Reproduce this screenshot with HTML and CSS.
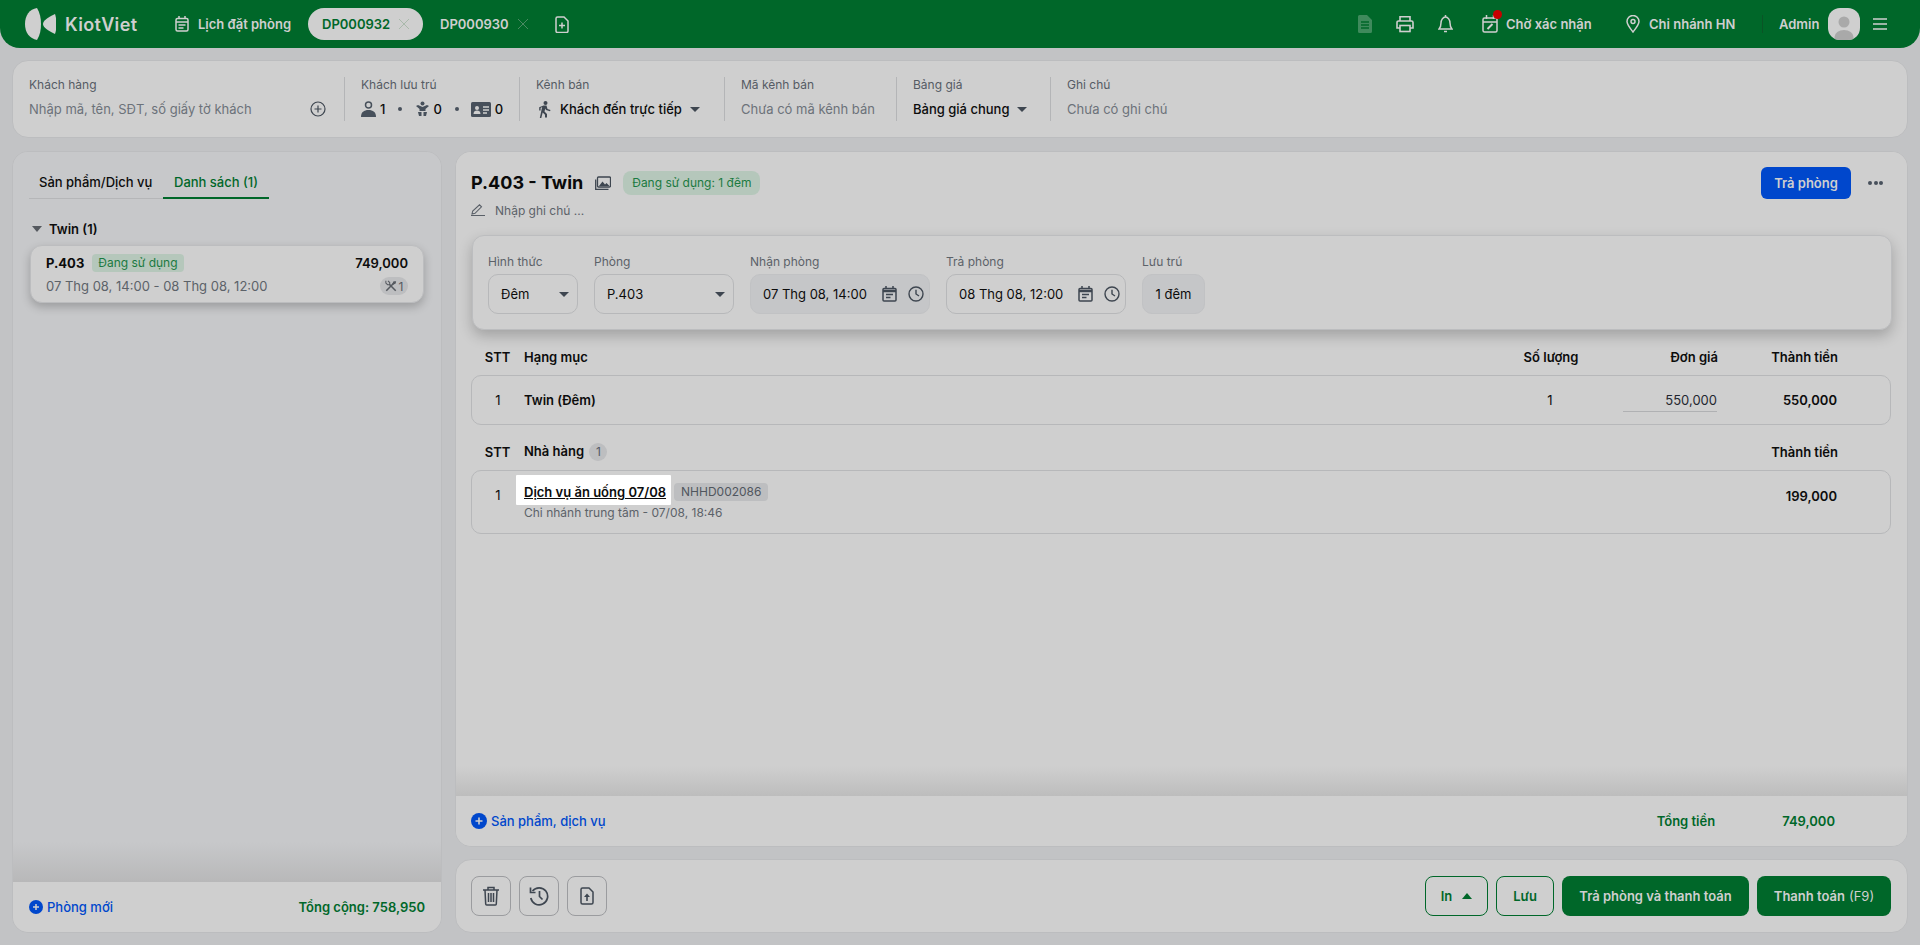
FILE: index.html
```html
<!DOCTYPE html>
<html lang="vi">
<head>
<meta charset="utf-8">
<title>KiotViet</title>
<link rel="stylesheet" href="styles.css">
</head>
<body>
<div class="page">
<header class="topbar">
  <svg class="logo" viewBox="0 0 32 32"><path d="M13 0C5.500 1 1 7.500 1 16S5.500 30.500 13 32C16 27 17 22 17 16S16 5 13 0Z" fill="#cfcfcf"/><path d="M31 6C24 9 19 13 19 16S24 23 31 26C32 23 32.500 19.500 32.500 16S32 9 31 6Z" fill="#cfcfcf"/></svg>
  <span class="brand">KiotViet</span>
  <svg class="ic14 nav-cal" viewBox="0 0 14 16" fill="none" stroke="#cfcfcf" stroke-width="1.5"><rect x="1" y="2.5" width="12" height="12.5" rx="1.5"/><path d="M4 0v3M10 0v3M1 6h12M3.5 9h7M3.5 12h5"/></svg>
  <span class="nav-link">Lịch đặt phòng</span>
  <span class="tab-pill">DP000932<svg class="x" viewBox="0 0 12 12"><path d="M1 1l10 10M11 1L1 11"/></svg></span>
  <span class="tab-plain">DP000930<svg class="x dark" viewBox="0 0 12 12"><path d="M1 1l10 10M11 1L1 11"/></svg></span>
  <svg class="nav-new" viewBox="0 0 14 17" fill="none" stroke="#cfcfcf" stroke-width="1.5"><path d="M1 2.500A1.500 1.500 0 0 1 2.500 1H9l4 4v10a1.500 1.500 0 0 1-1.500 1.500h-9A1.500 1.500 0 0 1 1 15Z"/><path d="M7 6.500v6M4 9.500h6"/></svg>
  <div class="top-right">
    <svg class="t-doc" viewBox="0 0 14 18"><path d="M1.500 0H9l5 5v11.500a1.500 1.500 0 0 1-1.500 1.500h-11A1.500 1.500 0 0 1 0 16.500v-15A1.500 1.500 0 0 1 1.500 0Z" fill="#3f8a5c"/><path d="M3 7h8M3 10h8M3 13h8" stroke="#006729" stroke-width="1.300"/></svg>
    <svg class="t-print" viewBox="0 0 18 18" fill="none" stroke="#cfcfcf" stroke-width="1.600"><path d="M4 6V1.800h10V6M4 13H1V7.500A1.500 1.500 0 0 1 2.500 6h13A1.500 1.500 0 0 1 17 7.500V13h-3"/><rect x="4" y="10.500" width="10" height="6"/></svg>
    <svg class="t-bell" viewBox="0 0 15 18" fill="none" stroke="#cfcfcf" stroke-width="1.500"><path d="M1 14h13c-1.500-1.500-2-3-2-6S10 2 7.500 2 3 5 3 8s-.5 4.500-2 6Z"/><path d="M7.500 0v2M6 16.500h3" /></svg>
    <span class="t-pend">
      <svg class="t-pcal" viewBox="0 0 16 18" fill="none" stroke="#cfcfcf" stroke-width="1.500"><rect x="1" y="3" width="14" height="14" rx="1.500"/><path d="M4.500 0v4M11.500 0v4M1 7h14"/><path d="M5.500 14l5-5" stroke-width="2"/></svg>
      <i class="red-dot"></i>
    </span>
    <span class="t-text t-wait">Chờ xác nhận</span>
    <svg class="t-pin" viewBox="0 0 14 18" fill="none" stroke="#cfcfcf" stroke-width="1.500"><path d="M7 17C3.500 12.500 1 9.500 1 6.500a6 6 0 0 1 12 0C13 9.500 10.500 12.500 7 17Z"/><circle cx="7" cy="6.500" r="2"/></svg>
    <span class="t-text t-branch">Chi nhánh HN</span>
    <i class="t-sep"></i>
    <span class="t-admin">Admin</span>
    <span class="avatar"><svg viewBox="0 0 32 32"><circle cx="16" cy="14" r="5.500" fill="#a9a9a9"/><ellipse cx="16" cy="29" rx="9.500" ry="7" fill="#a9a9a9"/></svg></span>
    <svg class="t-menu" viewBox="0 0 14 12" stroke="#cfcfcf" stroke-width="1.500"><path d="M0 1h14M0 6h14M0 11h14"/></svg>
  </div>
</header>

<section class="infobar">
  <div class="ib ib-cust">
    <div class="lbl">Khách hàng</div>
    <div class="val muted cust-row"><span>Nhập mã, tên, SĐT, số giấy tờ khách</span>
      <svg class="plus-o" viewBox="0 0 16 16" fill="none" stroke="#3e4650" stroke-width="1.200"><circle cx="8" cy="8" r="7"/><path d="M8 4.500v7M4.500 8h7"/></svg></div>
  </div>
  <div class="ib ib-guest">
    <div class="lbl">Khách lưu trú</div>
    <div class="val guests">
      <svg class="g-ad" viewBox="0 0 15 16"><circle cx="7.500" cy="4" r="3" fill="none" stroke="#47505b" stroke-width="1.500"/><path d="M0 16c0-5 3-7 7.500-7S15 11 15 16Z" fill="#47505b"/></svg><b>1</b><i class="dot"></i>
      <svg class="g-ch" viewBox="0 0 13 16" fill="#47505b"><circle cx="6.500" cy="2.500" r="2"/><path d="M0 5l2-1 4.500 2L11 4l2 1-3.500 3v2h-6V8Z"/><path d="M2 11h3.500v4H3ZM7.500 11H11l-1 4H7.500Z"/></svg><b>0</b><i class="dot"></i>
      <svg class="g-id" viewBox="0 0 20 15"><rect width="20" height="15" rx="1.500" fill="#47505b"/><circle cx="6" cy="6" r="2" fill="#cfcfcf"/><path d="M2.500 12c0-2.500 1.500-3.500 3.500-3.500s3.500 1 3.500 3.500Z" fill="#cfcfcf"/><path d="M12 5h6M12 8h6M12 11h4" stroke="#cfcfcf" stroke-width="1.300"/></svg><b>0</b>
    </div>
  </div>
  <div class="ib ib-chan">
    <div class="lbl">Kênh bán</div>
    <div class="val strong chan-row">
      <svg class="walk" viewBox="0 0 15 17" fill="#3e4650"><circle cx="8.500" cy="2" r="2"/><path d="M6.500 4.500h3l1 3.500 3 1-.5 1.200-4-1.200-.7-1.500-.8 3 2.500 2.500v3.500H8v-2.700L5.700 11.500 4.300 17H2.800L4.700 8l.5-2-1.600 1v2.500H2.200V6.300Z"/></svg>
      <span>Khách đến trực tiếp</span><i class="caret"></i>
    </div>
  </div>
  <div class="ib ib-code">
    <div class="lbl">Mã kênh bán</div>
    <div class="val muted">Chưa có mã kênh bán</div>
  </div>
  <div class="ib ib-price">
    <div class="lbl">Bảng giá</div>
    <div class="val strong price-row"><span>Bảng giá chung</span><i class="caret"></i></div>
  </div>
  <div class="ib ib-note">
    <div class="lbl">Ghi chú</div>
    <div class="val muted">Chưa có ghi chú</div>
  </div>
</section>

<div class="columns">
  <aside class="side">
    <div class="side-main">
      <div class="tabs"><span class="tab">Sản phẩm/Dịch vụ</span><span class="tab tab-on">Danh sách (1)</span></div>
      <div class="group"><i class="caret caret-grey"></i><span>Twin (1)</span></div>
      <div class="room">
        <div class="room-top"><b class="room-no">P.403</b><span class="badge room-badge">Đang sử dụng</span><b class="room-price">749,000</b></div>
        <div class="room-bot"><span>07 Thg 08, 14:00 - 08 Thg 08, 12:00</span>
          <span class="chip"><svg viewBox="0 0 14 14" fill="none" stroke="#55595f"><path d="M1.500 12.500L11 3" stroke-width="1.800"/><path d="M10 1.500l-1.500 3 1 1 3-1.500L13 1.500Z" fill="#55595f" stroke="none"/><path d="M12.500 12.500L5 5" stroke-width="1.800"/><path d="M1 1v2.500L3 5.500h2.500V3L3.500 1" stroke-width="1.200"/></svg>1</span></div>
      </div>
    </div>
    <div class="side-foot">
      <span class="add small"><svg viewBox="0 0 14 14"><circle cx="7" cy="7" r="7" fill="#0047cc"/><path d="M7 4v6M4 7h6" stroke="#cfcfcf" stroke-width="1.500"/></svg>Phòng mới</span>
      <b class="grand">Tổng cộng: 758,950</b>
    </div>
  </aside>

  <div class="main">
    <section class="detail">
      <div class="detail-body">
        <div class="title-row">
          <h1>P.403 - Twin</h1>
          <svg class="pic" viewBox="0 0 16 14" fill="none" stroke="#3e4650" stroke-width="1.300"><rect x="2.500" y="1" width="13" height="10" rx="1"/><path d="M.7 3.500v9.800h12.800"/><path d="M4 10l3.500-4.500 2.500 3 1.500-1.500L14.500 10" fill="#3e4650" stroke="none"/></svg>
          <span class="badge title-badge">Đang sử dụng: 1 đêm</span>
          <span class="btn-blue">Trả phòng</span>
          <span class="more"><i></i><i></i><i></i></span>
        </div>
        <div class="note-row"><svg viewBox="0 0 14 12" fill="none" stroke="#5a6068" stroke-width="1.100"><path d="M1 10l.7-3L8.500 .8l2 2L4 9.300ZM0 11.500h14"/></svg><span>Nhập ghi chú ...</span></div>
        <div class="form-card">
          <div class="fld"><div class="flbl">Hình thức</div><div class="ctl ctl-type"><span>Đêm</span><i class="caret"></i></div></div>
          <div class="fld"><div class="flbl">Phòng</div><div class="ctl ctl-room"><span>P.403</span><i class="caret"></i></div></div>
          <div class="fld"><div class="flbl">Nhận phòng</div><div class="ctl ctl-date off"><span>07 Thg 08, 14:00</span>
            <svg class="d-cal" viewBox="0 0 15 16" fill="none" stroke="#3e4650" stroke-width="1.500"><rect x="1" y="2.500" width="13" height="12.500" rx="1"/><path d="M1 5h13" stroke-width="2.500"/><path d="M4 0v3M11 0v3M4 8.500h7M4 11.500h4.500"/></svg>
            <svg class="d-clk" viewBox="0 0 16 16" fill="none" stroke="#3e4650" stroke-width="1.400"><circle cx="8" cy="8" r="7"/><path d="M8 3.800V8l3 2"/></svg></div></div>
          <div class="fld"><div class="flbl">Trả phòng</div><div class="ctl ctl-date"><span>08 Thg 08, 12:00</span>
            <svg class="d-cal" viewBox="0 0 15 16" fill="none" stroke="#3e4650" stroke-width="1.500"><rect x="1" y="2.500" width="13" height="12.500" rx="1"/><path d="M1 5h13" stroke-width="2.500"/><path d="M4 0v3M11 0v3M4 8.500h7M4 11.500h4.500"/></svg>
            <svg class="d-clk" viewBox="0 0 16 16" fill="none" stroke="#3e4650" stroke-width="1.400"><circle cx="8" cy="8" r="7"/><path d="M8 3.800V8l3 2"/></svg></div></div>
          <div class="fld"><div class="flbl">Lưu trú</div><div class="ctl ctl-stay off">1 đêm</div></div>
        </div>

        <div class="grid thead">
          <b class="c">STT</b><b>Hạng mục</b><b class="c">Số lượng</b><b class="r">Đơn giá</b><b class="r">Thành tiền</b>
        </div>
        <div class="grid box box-one">
          <span class="c">1</span><b>Twin (Đêm)</b><span class="c">1</span><span class="r price-in">550,000</span><b class="r">550,000</b>
        </div>

        <div class="grid thead thead-2">
          <b class="c">STT</b><b class="with-n">Nhà hàng <span class="count">1</span></b><span></span><span></span><b class="r">Thành tiền</b>
        </div>
        <div class="grid box box-two">
          <span class="c n-one">1</span>
          <div class="svc">
            <div class="svc-top"><a class="spot">Dịch vụ ăn uống 07/08</a><span class="code">NHHD002086</span></div>
            <div class="svc-sub">Chi nhánh trung tâm - 07/08, 18:46</div>
          </div>
          <span></span><span></span><b class="r n-two">199,000</b>
        </div>
      </div>
      <div class="detail-foot">
        <span class="add"><svg viewBox="0 0 16 16"><circle cx="8" cy="8" r="8" fill="#0047cc"/><path d="M8 4.500v7M4.500 8h7" stroke="#cfcfcf" stroke-width="1.600"/></svg>Sản phẩm, dịch vụ</span>
        <span class="sum-l">Tổng tiền</span><span class="sum-v">749,000</span>
      </div>
    </section>
    <section class="actions">
      <span class="sq"><svg viewBox="0 0 16 20" fill="none" stroke="#3e4650" stroke-width="1.500"><path d="M0 4h16M5 4V1.500h6V4M2 4l.7 14a1 1 0 0 0 1 1h8.600a1 1 0 0 0 1-1L14 4M5.500 7v9M8 7v9M10.500 7v9"/></svg></span>
      <span class="sq"><svg viewBox="0 0 20 20" fill="none" stroke="#3e4650" stroke-width="1.700"><path d="M3.500 5A8.500 8.500 0 1 1 1.800 12M10.500 5v5.500l3 3"/><path d="M1.500 1.500V6.500H6.500" /></svg></span>
      <span class="sq"><svg viewBox="0 0 14 18" fill="none" stroke="#3e4650" stroke-width="1.500"><path d="M1 2.500A1.500 1.500 0 0 1 2.500 1H9l4 4v10.500a1.500 1.500 0 0 1-1.500 1.500h-9A1.500 1.500 0 0 1 1 15.500Z"/><path d="M7 14V8" stroke-width="1.600"/><path d="M4 10l3-3.500L10 10Z" fill="#3e4650" stroke="none"/></svg></span>
      <span class="act-gap"></span>
      <span class="btn-o btn-in">In<i class="caret caret-up"></i></span>
      <span class="btn-o btn-save">Lưu</span>
      <span class="btn-g btn-out">Trả phòng và thanh toán</span>
      <span class="btn-g btn-pay">Thanh toán <em>(F9)</em></span>
    </section>
  </div>
</div>
</div>
</body>
</html>
```

FILE: styles.css
```css
* { box-sizing: border-box; }
html, body { margin: 0; height: 100%; }
body { background: #c2c3c5; font-family: Inter, "Noto Sans", sans-serif; font-size: 13px; color: #0c0c0c; overflow: hidden; }
svg { display: block; flex: none; }
i, em { font-style: normal; }
b { font-weight: 600; }
.page { height: 945px; display: flex; flex-direction: column; }

/* top bar */
.topbar { height: 48px; flex: none; background: #006729; border-radius: 0 0 20px 20px; display: flex; align-items: center; padding-left: 24px; color: #cfcfcf; font-weight: 600; font-size: 13px; }
.logo { width: 32px; height: 32px; }
.brand { margin-left: 9px; font-size: 18px; font-weight: 600; letter-spacing: .35px; width: 72px; white-space: nowrap; color: #cfcfcf; }
.nav-cal { margin-left: 38px; }
.ic14 { width: 14px; height: 16px; }
.nav-link { margin-left: 9px; width: 110px; white-space: nowrap; }
.tab-pill { width: 115px; height: 32px; background: #cfcfcf; color: #006729; border-radius: 16px; display: flex; align-items: center; padding-left: 14px; }
.tab-plain { margin-left: 17px; display: flex; align-items: center; color: #cfcfcf; }
.x { width: 12px; height: 12px; margin-left: 8px; fill: none; stroke: #a9b9ab; stroke-width: 1; }
.x.dark { stroke: #4a8a62; }
.nav-new { width: 14px; height: 17px; margin-left: 26px; }
.top-right { margin-left: auto; display: flex; align-items: center; padding-right: 33px; }
.t-doc { width: 14px; height: 18px; }
.t-print { width: 18px; height: 18px; margin-left: 24px; }
.t-bell { width: 15px; height: 18px; margin-left: 24px; }
.t-pend { position: relative; margin-left: 29px; display: block; }
.t-pcal { width: 16px; height: 18px; }
.red-dot { position: absolute; left: 11px; top: -5px; width: 9px; height: 9px; border-radius: 50%; background: #c80000; }
.t-text { white-space: nowrap; }
.t-wait { margin-left: 8px; width: 85px; }
.t-pin { width: 14px; height: 18px; margin-left: 35px; }
.t-branch { margin-left: 9px; width: 86px; }
.t-sep { width: 1px; height: 18px; background: #0a5426; margin-left: 27px; }
.t-admin { margin-left: 16px; width: 42px; white-space: nowrap; }
.avatar { width: 32px; height: 32px; border-radius: 12px; background: #cfcfcf; margin-left: 7px; overflow: hidden; display: block; }
.avatar svg { width: 32px; height: 32px; }
.t-menu { width: 14px; height: 12px; margin-left: 13px; }

/* info bar */
.infobar { margin: 12px 12px 0; height: 78px; flex: none; background: #cfcfcf; border: 1px solid #bcbdbf; border-radius: 16px; display: flex; align-items: center; }
.ib { height: 44px; padding-left: 16px; padding-bottom: 1px; border-left: 1px solid #b4b5b7; display: flex; flex-direction: column; justify-content: space-between; flex: none; }
.ib-cust { width: 331px; border-left: 0; padding-left: 16px; padding-right: 18px; }
.ib-guest { width: 175px; }
.ib-chan { width: 205px; }
.ib-code { width: 172px; }
.ib-price { width: 154px; }
.lbl { color: #555b64; font-size: 12px; line-height: 16px; }
.val { line-height: 22px; font-size: 13px; display: flex; align-items: center; white-space: nowrap; }
.muted { color: #6c727a; }
.strong { font-weight: 500; color: #0c0c0c; }
.cust-row { justify-content: space-between; }
.plus-o { width: 16px; height: 16px; }
.guests b { font-weight: 500; margin-left: 4px; }
.g-ad { width: 15px; height: 16px; }
.g-ch { width: 13px; height: 16px; }
.g-id { width: 20px; height: 15px; margin-left: -2px; }
.guests .dot { width: 4px; height: 4px; border-radius: 50%; background: #47505b; margin: 0 14px 0 13px; }
.walk { width: 15px; height: 17px; margin-right: 8px; margin-left: 1px; }
.caret { width: 0; height: 0; border-left: 5.500px solid transparent; border-right: 5.500px solid transparent; border-top: 5.500px solid #3e4650; flex: none; display: block; }
.chan-row .caret { margin-left: 8px; }
.price-row .caret { margin-left: 8px; }

/* columns */
.columns { flex: 1; display: flex; gap: 13px; padding: 13px 12px 12px; min-height: 0; }
.side { width: 430px; flex: none; border: 1px solid #bcbdbf; border-radius: 16px; background: #c7c8ca; display: flex; flex-direction: column; overflow: hidden; }
.side-main { flex: 1; padding: 16px 15px 0 16px; background: linear-gradient(to bottom, #c7c8ca calc(100% - 40px), #b8b8b9 100%); }
.tabs { display: flex; height: 31px; margin-right: 157px; border-bottom: 1px solid #b5b6b8; }
.tab { width: 134px; padding-left: 10px; font-weight: 500; line-height: 28px; white-space: nowrap; color: #0c0c0c; }
.tab-on { width: 106px; padding-left: 11px; color: #006729; border-bottom: 2px solid #006729; height: 31px; }
.group { display: flex; align-items: center; height: 18px; margin-top: 21px; padding-left: 3px; font-weight: 600; gap: 7px; }
.caret-grey { border-top-color: #55595f; border-left-width: 5px; border-right-width: 5px; border-top-width: 6px; }
.room { margin-top: 7px; margin-left: 1px; width: 394px; height: 58px; background: #cfcfcf; border: 1px solid #bcbdbf; border-radius: 12px; box-shadow: 0 4px 10px rgba(0,0,0,.22); padding: 8px 15px 0; }
.room-top { display: flex; align-items: center; height: 18px; }
.room-no { font-weight: 700; }
.badge { background: #b5c7bb; color: #1b7a41; border-radius: 4px; font-size: 12px; display: block; white-space: nowrap; }
.room-badge { margin-left: 8px; height: 18px; line-height: 18px; padding: 0 6px; }
.room-price { margin-left: auto; font-weight: 600; font-size: 13px; }
.room-bot { display: flex; align-items: center; justify-content: space-between; margin-top: 5px; color: #5c6269; font-size: 13px; }
.chip { background: #bdbec0; border-radius: 9px; width: 28px; height: 18px; display: flex; align-items: center; justify-content: center; gap: 2px; font-size: 12px; color: #55595f; }
.chip svg { width: 12px; height: 12px; }
.side-foot { height: 50px; flex: none; background: #cfcfcf; display: flex; align-items: center; justify-content: space-between; padding: 0 16px 0 16px; }
.add { display: flex; align-items: center; color: #0047cc; font-weight: 500; white-space: nowrap; }
.add svg { width: 16px; height: 16px; margin-right: 4px; }
.add.small svg { width: 14px; height: 14px; }
.grand { color: #006729; font-weight: 600; }

/* main */
.main { flex: 1; display: flex; flex-direction: column; gap: 12px; min-width: 0; }
.detail { flex: 1; background: #cfcfcf; border: 1px solid #bcbdbf; border-radius: 16px; display: flex; flex-direction: column; overflow: hidden; }
.detail-body { flex: 1; padding: 15px 15px 0; background: linear-gradient(to bottom, #cfcfcf calc(100% - 30px), #bdbdbd 100%); }
.title-row { display: flex; align-items: center; height: 32px; }
h1 { margin: 0; font-size: 18px; font-weight: 700; line-height: 24px; color: #0a0a0a; white-space: nowrap; }
.pic { width: 16px; height: 14px; margin-left: 12px; }
.title-badge { margin-left: 12px; height: 24px; line-height: 24px; padding: 0 9px; border-radius: 8px; font-size: 12px; }
.btn-blue { margin-left: auto; background: #0047cc; color: #cfcfcf; width: 90px; height: 32px; line-height: 32px; text-align: center; border-radius: 6px; font-weight: 600; }
.more { display: flex; gap: 1.500px; margin: 0 9px 0 17px; }
.more i { width: 4px; height: 4px; border-radius: 50%; background: #47505b; }
.note-row { display: flex; align-items: center; height: 24px; padding-bottom: 2px; color: #5c6269; font-size: 12px; }
.note-row svg { width: 14px; height: 12px; margin-right: 10px; }
.form-card { margin-top: 12px; width: 1420px; margin-left: 1px; height: 95px; background: #cfcfcf; border: 1px solid #bcbdbf; border-radius: 12px; box-shadow: 0 6px 14px rgba(0,0,0,.22); padding: 18px 15px 0; display: flex; gap: 16px; }
.flbl { color: #5c6269; font-size: 12px; line-height: 16px; margin-bottom: 4px; white-space: nowrap; }
.ctl { height: 40px; border: 1px solid #b7b8ba; border-radius: 10px; display: flex; align-items: center; padding: 0 5px 0 12px; font-size: 13px; color: #0c0c0c; white-space: nowrap; }
.ctl .caret { margin-left: auto; margin-right: 3px; }
.ctl-type { width: 90px; }
.ctl-room { width: 140px; }
.ctl-date { width: 180px; }
.ctl-date svg { flex: none; }
.d-cal { width: 15px; height: 16px; margin-left: auto; }
.d-clk { width: 16px; height: 16px; margin-left: 11px; }
.off { background: #c5c6c8; border-color: #c1c2c4; }
.ctl-stay { width: 63px; justify-content: center; padding: 0; }

/* tables */
.grid { display: grid; grid-template-columns: 53px 1fr 102px 116px 120px; padding-right: 53px; align-items: center; width: 1420px; }
.c { text-align: center; }
.r { text-align: right; }
.thead { height: 18px; margin-top: 18px; line-height: 18px; font-weight: 600; }
.thead-2 { margin-top: 17px; }
.box { border: 1px solid #b7b8ba; border-radius: 10px; margin-top: 9px; }
.box-one { height: 50px; }
.box-two { height: 64px; margin-top: 10px; align-items: start; }
.box > .c:first-child { margin-left: -1px; }
.box-one > b:nth-child(2) { margin-left: -1px; }
.price-in { justify-self: end; width: 94px; border-bottom: 1px solid #b0b1b3; height: 24px; line-height: 24px; color: #1f2730; }
.count { display: inline-block; width: 18px; height: 18px; line-height: 18px; text-align: center; background: #bdbec0; border-radius: 50%; font-size: 12px; font-weight: 400; color: #555b64; margin-left: 2px; }
.with-n { white-space: nowrap; }
.n-one { margin-top: 16px; }
.n-two { margin-top: 17px; }
.svc { margin-left: -1px; padding-top: 4px; }
.svc-top { display: flex; align-items: flex-start; }
.spot { display: block; background: #fff; margin-left: -8px; padding: 8px 5px 4px 8px; height: 30px; line-height: 18px; font-weight: 600; color: #0c0c0c; text-decoration: underline; white-space: nowrap; border-radius: 1px; }
.code { margin-left: 3px; margin-top: 8px; height: 18px; line-height: 18px; padding: 0 7px; background: #bdbec0; border-radius: 4px; font-size: 12px; color: #50565e; }
.svc-sub { font-size: 12px; line-height: 16px; color: #5c6269; }
.detail-foot { height: 50px; flex: none; display: flex; align-items: center; padding: 0 72px 0 15px; background: #cfcfcf; font-weight: 500; }
.sum-l { margin-left: auto; color: #006729; font-weight: 600; }
.sum-v { margin-left: 67px; color: #006729; font-weight: 600; }

/* actions */
.actions { height: 74px; flex: none; background: #cfcfcf; border: 1px solid #bcbdbf; border-radius: 16px; display: flex; align-items: center; padding: 0 16px 0 15px; gap: 8px; }
.sq { width: 40px; height: 40px; border: 1px solid #9b9c9f; border-radius: 8px; display: flex; align-items: center; justify-content: center; }
.sq:nth-child(1) svg { width: 16px; height: 20px; }
.sq:nth-child(2) svg { width: 20px; height: 20px; }
.sq:nth-child(3) svg { width: 14px; height: 18px; }
.act-gap { flex: 1; }
.btn-o { height: 40px; border: 1px solid #006729; border-radius: 8px; color: #006729; display: flex; align-items: center; justify-content: center; font-weight: 600; }
.btn-in { width: 63px; gap: 10px; }
.btn-save { width: 58px; }
.caret-up { border-top: 0; border-bottom: 6px solid #006729; }
.btn-g { height: 40px; background: #006729; color: #cfcfcf; border-radius: 8px; display: flex; align-items: center; justify-content: center; font-weight: 600; white-space: nowrap; }
.btn-g em { margin-left: 4px; font-weight: 400; }
.btn-out { width: 187px; }
.btn-pay { width: 134px; }
```
